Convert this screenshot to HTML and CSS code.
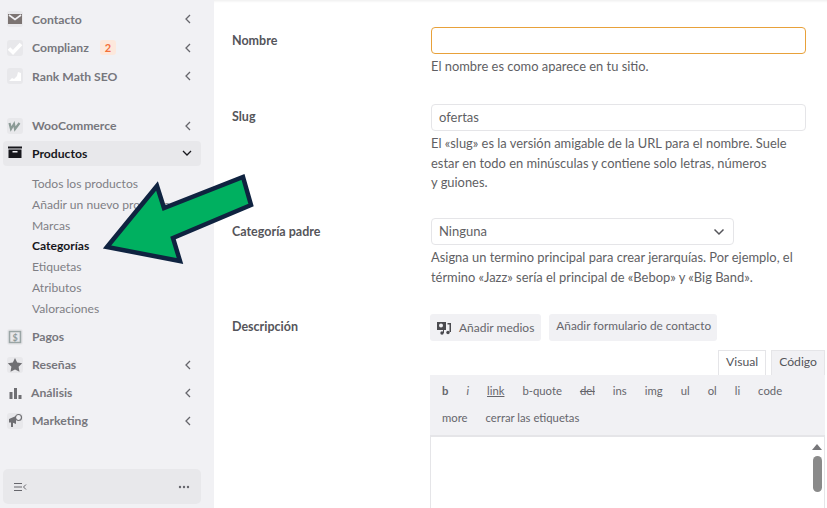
FILE: index.html
```html
<!DOCTYPE html>
<html lang="es">
<head>
<meta charset="utf-8">
<title>Categorías</title>
<link rel="stylesheet" href="styles.css">
</head>
<body>
<div class="app">
  <aside class="sidebar">
    <nav class="menu">
      <a class="item"><span class="ico"><svg width="16" height="16" viewBox="0 0 16 16"><path d="M1 3h14v10H1z" fill="#7c7472"/><path d="M2 4l6 4.500L14 4" fill="none" stroke="#f1f1f4" stroke-width="1.600"/></svg></span><span class="name">Contacto</span><svg class="chev" viewBox="0 0 8 10"><path d="M6 1L2 5l4 4" /></svg></a>
      <a class="item"><span class="ico"><svg width="16" height="16" viewBox="0 0 16 16"><path d="M2 8.500l4 4 8-8.500" fill="none" stroke="#fff" stroke-width="3.600"/></svg></span><span class="name">Complianz</span><span class="badge">2</span><svg class="chev" viewBox="0 0 8 10"><path d="M6 1L2 5l4 4" /></svg></a>
      <a class="item"><span class="ico"><svg width="16" height="16" viewBox="0 0 16 16"><path d="M2 13l3-3 2 1 3-3 1-4 3 1v8z" fill="#fff"/></svg></span><span class="name">Rank Math SEO</span><svg class="chev" viewBox="0 0 8 10"><path d="M6 1L2 5l4 4" /></svg></a>
      <a class="item woo"><span class="ico"><svg width="16" height="16" viewBox="0 0 16 16"><path d="M2.500 5l1.500 6 3-5 1 5 4.500-6" fill="none" stroke="#8b9a96" stroke-width="2.200"/></svg></span><span class="name">WooCommerce</span><svg class="chev" viewBox="0 0 8 10"><path d="M6 1L2 5l4 4" /></svg></a>
      <a class="item active"><span class="ico bare"><svg width="16" height="16" viewBox="0 0 16 16"><path d="M1 1.500h14v2H1z" fill="#17171c"/><path d="M1.500 4.500h13V13h-13z" fill="#17171c"/><path d="M5.500 6h5v1.500h-5z" fill="#f1f1f4"/></svg></span><span class="name">Productos</span><svg class="chev" viewBox="0 0 10 8"><path d="M1 2l4 4 4-4" /></svg></a>
      <div class="sub">
        <a>Todos los productos</a>
        <a>Añadir un nuevo producto</a>
        <a>Marcas</a>
        <a class="current">Categorías</a>
        <a>Etiquetas</a>
        <a>Atributos</a>
        <a>Valoraciones</a>
      </div>
      <a class="item"><span class="ico"><svg width="16" height="16" viewBox="0 0 16 16"><path d="M2.500 2.500h11v11h-11z" fill="none" stroke="#9aa5a5" stroke-width="1.600"/><text x="8" y="11.500" text-anchor="middle" class="dollar">$</text></svg></span><span class="name">Pagos</span></a>
      <a class="item"><span class="ico"><svg width="16" height="16" viewBox="0 0 16 16"><path d="M8 1l2.200 4.600 5 .7-3.600 3.500.9 5L8 12.400 3.500 14.800l.9-5L.8 6.300l5-.7z" fill="#6f6f73"/></svg></span><span class="name">Reseñas</span><svg class="chev" viewBox="0 0 8 10"><path d="M6 1L2 5l4 4" /></svg></a>
      <a class="item"><span class="ico bare"><svg width="16" height="16" viewBox="0 0 16 16"><path d="M2.500 7h3v7h-3zM7 3h3v11H7zM11.500 10h3v4h-3z" fill="#6f6f73"/></svg></span><span class="name tight">Análisis</span><svg class="chev" viewBox="0 0 8 10"><path d="M6 1L2 5l4 4" /></svg></a>
      <a class="item"><span class="ico"><svg width="16" height="16" viewBox="0 0 16 16"><path d="M2 6l7-3v8L6 9.800V14H4V9.500H2z" fill="#6f6f73"/><circle cx="11.500" cy="4.500" r="3" fill="#f1f1f4" stroke="#6f6f73" stroke-width="1.200"/></svg></span><span class="name">Marketing</span><svg class="chev" viewBox="0 0 8 10"><path d="M6 1L2 5l4 4" /></svg></a>
    </nav>
    <div class="foot">
      <svg width="14" height="10" viewBox="0 0 14 10"><path d="M1 1.500h8M1 5h8M1 8.500h8M13 2.500L10.500 5 13 7.500" fill="none" stroke="#66666c" stroke-width="1"/></svg>
      <svg width="12" height="4" viewBox="0 0 12 4"><circle cx="2" cy="2" r="1.200" fill="#66666c"/><circle cx="6" cy="2" r="1.200" fill="#66666c"/><circle cx="10" cy="2" r="1.200" fill="#66666c"/></svg>
    </div>
  </aside>
  <main class="main">
    <div class="row row-name">
      <label class="label">Nombre</label>
      <div class="field">
        <div class="input focus"></div>
        <p class="help">El nombre es como aparece en tu sitio.</p>
      </div>
    </div>
    <div class="row row-slug">
      <label class="label">Slug</label>
      <div class="field">
        <div class="input">ofertas</div>
        <p class="help">El «slug» es la versión amigable de la URL para el nombre. Suele<br>estar en todo en minúsculas y contiene solo letras, números<br>y guiones.</p>
      </div>
    </div>
    <div class="row row-parent">
      <label class="label">Categoría padre</label>
      <div class="field">
        <div class="input select">Ninguna<svg width="12" height="8" viewBox="0 0 12 8"><path d="M1.500 1.500L6 6l4.500-4.500" fill="none" stroke="#55555a" stroke-width="1.500"/></svg></div>
        <p class="help">Asigna un termino principal para crear jerarquías. Por ejemplo, el<br>término «Jazz» sería el principal de «Bebop» y «Big Band».</p>
      </div>
    </div>
    <div class="row row-desc">
      <label class="label">Descripción</label>
      <div class="field editor">
        <div class="buttons">
          <span class="btn"><svg width="16" height="16" viewBox="0 0 16 16"><path d="M1 2h9v8H1z" fill="#4a4a4f"/><circle cx="5" cy="5.500" r="2" fill="#f1f1f4"/><path d="M11.500 3H15v9h-1.500V4.500h-2z" fill="#4a4a4f"/><circle cx="12" cy="12.500" r="1.700" fill="#4a4a4f"/><circle cx="6" cy="13" r="1.700" fill="#4a4a4f"/><path d="M7 8v5h1V8z" fill="#4a4a4f"/></svg>Añadir medios</span>
          <span class="btn plain">Añadir formulario de contacto</span>
        </div>
        <div class="tabs">
          <span class="tab on">Visual</span>
          <span class="tab">Código</span>
        </div>
        <div class="toolbar">
          <span class="b">b</span><span class="i">i</span><span class="u">link</span><span>b-quote</span><span class="s">del</span><span>ins</span><span>img</span><span>ul</span><span>ol</span><span>li</span><span>code</span><span>more</span><span>cerrar las etiquetas</span>
        </div>
        <div class="area">
          <div class="scroll"><span class="up"></span><span class="thumb"></span></div>
        </div>
      </div>
    </div>
  </main>
  <svg class="arrow" width="260" height="170" viewBox="0 0 260 170"><path d="M107 77L157 16 164 38 243 7 251 35 173 68 180 91z" fill="#00b060" stroke="#0f2340" stroke-width="4.500"/></svg>
</div>
</body>
</html>
```
FILE: styles.css
```css
* { box-sizing: border-box; }
html, body { margin: 0; height: 100%; overflow: hidden; }
body { font-family: "Lato", "Noto Sans", sans-serif; color: #5f5f64; background: #fff; }
.app { position: relative; display: flex; width: 827px; height: 508px; overflow: hidden; }

.sidebar { width: 214px; flex: none; background: #f1f1f4; display: flex; flex-direction: column; justify-content: space-between; padding: 5.300px 13px 4px 3px; }
.menu { display: flex; flex-direction: column; }
.item { display: flex; align-items: center; height: 28.400px; padding: 0 9px 0 4px; font-size: 12.200px; font-weight: 700; color: #77777d; }
.woo { margin-top: 21px; }
.ico { width: 16px; height: 16px; border-radius: 3px; background: #e8e8eb; display: flex; flex: none; margin-right: 9px; }
.ico.bare { background: none; }
.name { flex: none; }
.name.tight { margin-left: -1px; }
.chev { width: 8px; height: 10px; margin-left: auto; fill: none; stroke: #66666c; stroke-width: 1.300; }
.active { height: 25px; margin: 1px 0 2px; border-radius: 4px; background: #e8e8eb; color: #17171c; }
.active .chev { width: 10px; height: 8px; stroke: #17171c; }
.badge { margin-left: 11px; width: 16px; height: 15px; border-radius: 3px; background: #fde8dc; color: #f4703a; font-size: 11px; text-align: center; line-height: 15px; }
.sub { display: flex; flex-direction: column; padding: 6px 0 3px 29px; font-size: 12.100px; color: #7f7f85; }
.sub a { height: 20.860px; line-height: 20.860px; white-space: nowrap; }
.sub .current { color: #17171c; font-weight: 700; }
.sub ~ .item { height: 28px; }
.dollar { font: 700 9px "Lato", sans-serif; fill: #8f9a9a; }
.foot { height: 35px; border-radius: 5px; background: #e8e8eb; display: flex; align-items: center; justify-content: space-between; padding: 0 11px 0 10px; }

.main { flex: 1; min-width: 0; padding: 27px 0 0 18px; box-shadow: inset 0 3px 3px -2px rgba(0,0,0,.08); }
.row { display: grid; grid-template-columns: 199px 375px; }
.row-name { height: 77px; }
.row-slug { height: 114px; }
.row-parent { height: 96px; }
.label { font-size: 12.500px; font-weight: 700; color: #55555a; padding-top: 6px; }
.row-slug .label { padding-top: 5px; }
.row-desc .label { padding-top: 5px; }
.input { height: 27px; width: 375px; border: 1px solid #e5e5e8; border-radius: 4px; font-size: 13px; line-height: 25px; padding: 0 7px; color: #5f5f64; }
.focus { border-color: #e8a13a; }
.select { width: 303px; display: flex; align-items: center; justify-content: space-between; padding-right: 8px; }
.help { margin: 3px 0 0; font-size: 12.900px; line-height: 19.500px; color: #5f5f64; white-space: nowrap; }
.editor { width: 395px; margin-left: -1px; }
.buttons { display: flex; gap: 8px; }
.btn { height: 27px; padding: 0 7px 0 6px; border-radius: 3px; background: #f1f1f4; display: flex; align-items: center; gap: 7px; font-size: 12px; color: #66666c; white-space: nowrap; }
.plain { padding: 0 6px 4px 7px; font-size: 11.800px; }
.tabs { display: flex; justify-content: flex-end; gap: 5px; margin-top: 9px; }
.tab { height: 25px; padding: 0 7px; border: 1px solid #e5e5e8; border-bottom: 0; background: #f1f1f4; font-size: 12.200px; line-height: 22px; color: #55555a; }
.tab.on { background: #fff; }
.toolbar { height: 62px; width: 395px; background: #f1f1f4; border-bottom: 2px solid #e5e5e8; display: flex; flex-wrap: wrap; align-content: flex-start; padding: 2px 0 0 12px; column-gap: 18px; font-size: 11.300px; line-height: 27px; color: #66666c; }
.toolbar .b { font-weight: 700; }
.toolbar .i { font-style: italic; }
.toolbar .u { text-decoration: underline; }
.toolbar .s { text-decoration: line-through; }
.area { position: relative; width: 395px; height: 80px; border: 1px solid #e5e5e8; border-top: 0; }
.scroll { position: absolute; top: 0; right: 2px; width: 10px; height: 100%; display: flex; flex-direction: column; align-items: center; padding-top: 7px; gap: 6px; }
.up { width: 0; height: 0; border-left: 5px solid transparent; border-right: 5px solid transparent; border-bottom: 6px solid #77777a; }
.thumb { width: 9px; height: 36px; border-radius: 5px; background: #8a8a8a; }
.arrow { position: absolute; left: 0; top: 170px; }
```
